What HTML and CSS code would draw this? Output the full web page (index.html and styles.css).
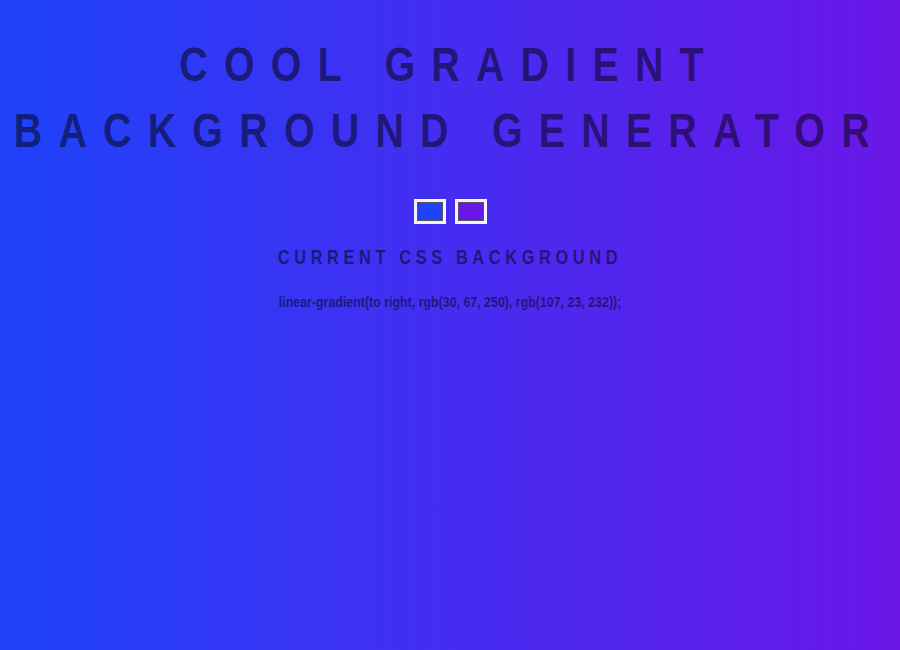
FILE: index.html
```html
<!DOCTYPE html>
<html>
<head>
<meta charset="utf-8">
<title>Background Generator</title>
<link rel="stylesheet" href="styles.css">
</head>
<body class="page">
  <h1 class="title">
    <span class="narrow">Cool Gradient</span>
    <span class="narrow">Background Generator</span>
  </h1>
  <div class="pickers">
    <input class="color1" type="color" name="color1" value="#1e43fa">
    <input class="color2" type="color" name="color2" value="#6b17e8">
  </div>
  <h2 class="subtitle"><span class="narrow">Current CSS Background</span></h2>
  <h3 class="css-text"><span class="narrow">linear-gradient(to right, rgb(30, 67, 250), rgb(107, 23, 232));</span></h3>
</body>
</html>
```

FILE: styles.css
```css
html {
  height: 100%;
}
.page {
  margin: 0;
  min-height: 100%;
  background: linear-gradient(to right, rgb(30, 67, 250), rgb(107, 23, 232));
  font-family: "Liberation Sans", Arial, sans-serif;
  color: rgba(0, 0, 0, 0.5);
  text-align: center;
}
.narrow {
  display: inline-block;
  white-space: nowrap;
  transform: scaleX(0.82);
  transform-origin: center;
}
.title,
.subtitle,
.css-text {
  display: flex;
  flex-direction: column;
  align-items: center;
}
.title {
  margin: 32px 0 0;
  font-size: 48px;
  font-weight: 700;
  line-height: 66px;
  letter-spacing: 19.8px;
  text-transform: uppercase;
}
.pickers {
  display: flex;
  justify-content: center;
  gap: 9px;
  margin-top: 35px;
}
.pickers input {
  width: 32px;
  height: 25px;
  padding: 2px;
  border: none;
  background: #f4f2fb;
  margin: 0;
}
.pickers input::-webkit-color-swatch-wrapper {
  padding: 1px;
}
.pickers input::-webkit-color-swatch {
  border: 1px solid #555;
}
.subtitle {
  margin: 22px 0 0;
  font-size: 20px;
  font-weight: 700;
  line-height: 23px;
  letter-spacing: 5.6px;
  text-transform: uppercase;
}
.css-text {
  margin: 24px 0 0;
  font-size: 15.5px;
  font-weight: 700;
  line-height: 18px;
}
.css-text .narrow {
  transform: scaleX(0.8);
}
```
